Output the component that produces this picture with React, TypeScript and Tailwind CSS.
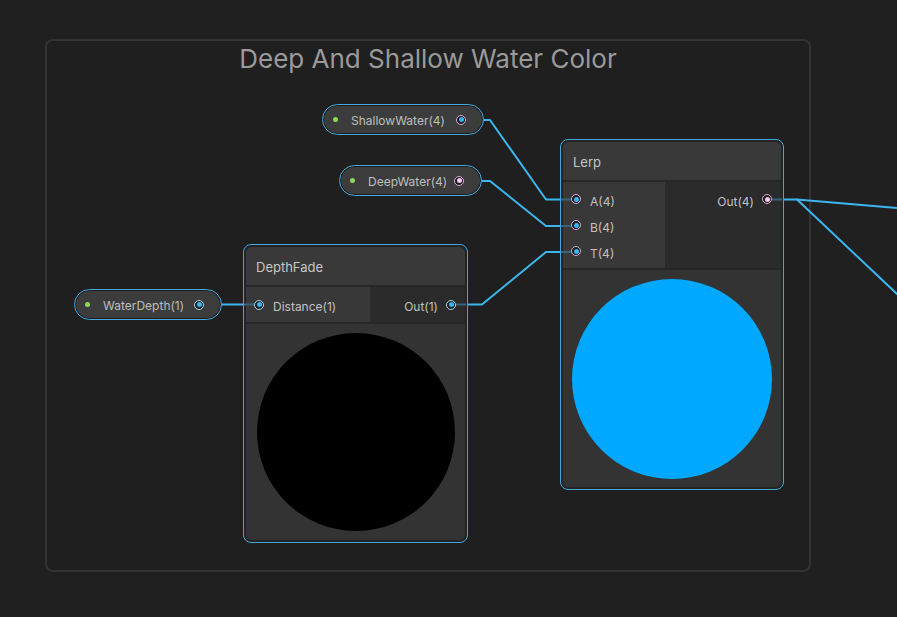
import React from 'react';

// Shader graph canvas: a group box with property pills, two nodes and wires between them.

const WIRE = '#3db6ef';
const STUB = '#35647c';

type PortKind = 'pc' | 'pp' | 'cc';

const PORT: Record<PortKind, { ring: string; core: string }> = {
  pc: { ring: 'border-[#dcaad8]', core: 'bg-[#38b5ee]' },
  pp: { ring: 'border-[#dcaad8]', core: 'bg-[#f3c6f0]' },
  cc: { ring: 'border-[#a3dbf0]', core: 'bg-[#38b5ee]' },
};

function Port({ kind }: { kind: PortKind }) {
  const p = PORT[kind];
  return (
    <span
      className={`flex h-[10px] w-[10px] shrink-0 items-center justify-center rounded-full border-[1.5px] bg-[#1c1c1c] ${p.ring}`}
    >
      <span className={`h-[5px] w-[5px] rounded-full ${p.core}`} />
    </span>
  );
}

function Property({ label, port, className }: { label: string; port: PortKind; className: string }) {
  return (
    <div className={`absolute h-[31px] rounded-full border border-[#45a9df] bg-[#1d1d1d] p-[1px] ${className}`}>
      <div className="flex h-full w-full items-center rounded-full bg-[#3c3c3c] pl-[9px] pr-[16px]">
        <span className="h-[5px] w-[5px] shrink-0 rounded-full bg-[#8ed65c]" />
        <span className="ml-[13px] mt-[2px] flex-1 text-[12px] leading-none text-[#bebebe]">{label}</span>
        <Port kind={port} />
      </div>
    </div>
  );
}

function InPort({ label, kind }: { label: string; kind: PortKind }) {
  return (
    <div className="flex h-[26px] items-center gap-[9px] pl-[8px]">
      <Port kind={kind} />
      <span className="mt-[5px] text-[12px] leading-none text-[#c0c0c0]">{label}</span>
    </div>
  );
}

function OutPort({ label, kind }: { label: string; kind: PortKind }) {
  return (
    <div className="flex h-[26px] items-center justify-end gap-[8px] pr-[9px]">
      <span className="mt-[5px] text-[12px] leading-none text-[#c0c0c0]">{label}</span>
      <Port kind={kind} />
    </div>
  );
}

function Preview({ color }: { color: 'black' | 'blue' }) {
  return (
    <div className="flex flex-1 items-center justify-center bg-[#333333]">
      {color === 'black' ? (
        <div className="h-[198px] w-[198px] rounded-full bg-black" />
      ) : (
        <div className="h-[200px] w-[200px] rounded-full bg-[#00a9ff]" />
      )}
    </div>
  );
}

export default function App() {
  return (
    <div
      className="relative h-[617px] w-[897px] overflow-hidden bg-[#202020]"
      style={{ fontFamily: 'Inter, "Noto Sans", sans-serif' }}
    >
      {/* Group */}
      <div className="absolute left-[45px] top-[39px] h-[533px] w-[766px] rounded-[8px] border-2 border-[#333333] bg-[#1f1f1f]">
        <div className="pt-[2px] text-center text-[26px] leading-[32px] text-[#9a9a9a]">Deep And Shallow Water Color</div>
      </div>

      {/* Wires */}
      <svg className="absolute inset-0" width={897} height={617} fill="none">
        <g stroke={WIRE} strokeWidth={2} strokeLinejoin="round" strokeLinecap="round">
          <path d="M483 120 L490 120 L546 199.5 L560 199.5" />
          <path d="M482 181 L490 181 L546 226 L560 226" />
          <path d="M467 304.5 L482 304.5 L546 252 L560 252" />
          <path d="M221 304.5 L243 304.5" />
          <path d="M783 199.5 L797 199.5 L897 208" />
          <path d="M797 199.5 L897 294" />
        </g>
      </svg>

      <Property label="ShallowWater(4)" port="pc" className="left-[322px] top-[104px] w-[162px]" />
      <Property label="DeepWater(4)" port="pp" className="left-[339px] top-[165px] w-[143px]" />
      <Property label="WaterDepth(1)" port="cc" className="left-[74px] top-[289px] w-[148px]" />

      {/* DepthFade */}
      <div className="absolute left-[243px] top-[244px] h-[299px] w-[225px] rounded-[8px] border border-[#43a7de] bg-[#242424] p-[2px]">
        <div className="flex h-full flex-col overflow-hidden rounded-[6px] bg-[#333333]">
          <div className="flex h-[38px] items-center bg-[#393939] px-[10px] pt-[3px] text-[13px] text-[#c6c6c6]">DepthFade</div>
          <div className="h-[2px] bg-[#272727]" />
          <div className="flex h-[35px]">
            <div className="flex w-[124px] flex-col justify-center bg-[#383838]">
              <InPort label="Distance(1)" kind="cc" />
            </div>
            <div className="flex flex-1 flex-col justify-center bg-[#2b2b2b]">
              <OutPort label="Out(1)" kind="cc" />
            </div>
          </div>
          <div className="h-[2px] bg-[#272727]" />
          <Preview color="black" />
        </div>
      </div>

      {/* Lerp */}
      <div className="absolute left-[560px] top-[139px] h-[351px] w-[224px] rounded-[8px] border border-[#43a7de] bg-[#242424] p-[2px]">
        <div className="flex h-full flex-col overflow-hidden rounded-[6px] bg-[#333333]">
          <div className="flex h-[38px] items-center bg-[#393939] px-[10px] pt-[3px] text-[13px] text-[#c6c6c6]">Lerp</div>
          <div className="h-[2px] bg-[#272727]" />
          <div className="flex h-[86px]">
            <div className="flex w-[102px] flex-col bg-[#383838] pt-[4px]">
              <InPort label="A(4)" kind="pc" />
              <InPort label="B(4)" kind="pc" />
              <InPort label="T(4)" kind="pc" />
            </div>
            <div className="flex flex-1 flex-col bg-[#2b2b2b] pt-[4px]">
              <OutPort label="Out(4)" kind="pp" />
            </div>
          </div>
          <div className="h-[2px] bg-[#272727]" />
          <Preview color="blue" />
        </div>
      </div>

      {/* Dim stubs between node edges and ports */}
      <svg className="pointer-events-none absolute inset-0" width={897} height={617} fill="none">
        <g stroke={STUB} strokeWidth={2}>
          <path d="M244 304.5 L254 304.5" />
          <path d="M456 304.5 L466 304.5" />
          <path d="M561 199.5 L571 199.5" />
          <path d="M561 226 L571 226" />
          <path d="M561 252 L571 252" />
          <path d="M772 199.5 L782 199.5" />
        </g>
      </svg>
    </div>
  );
}
